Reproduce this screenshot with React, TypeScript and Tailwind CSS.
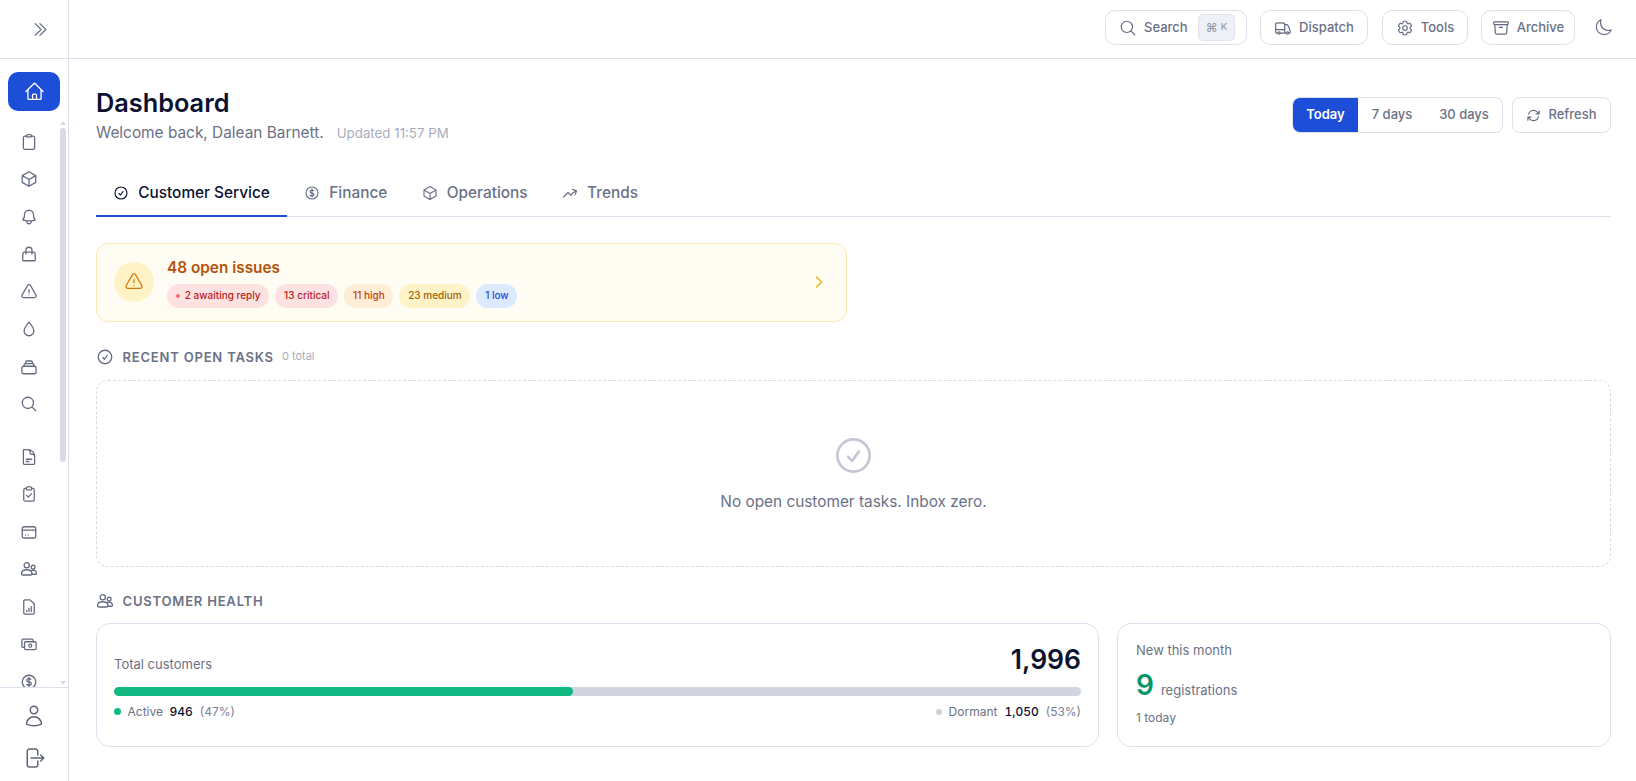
import React from "react";
import {
  HiOutlineHome, HiOutlineClipboard, HiOutlineCube, HiOutlineBell,
  HiOutlineExclamationTriangle, HiOutlineMagnifyingGlass, HiOutlineDocumentText,
  HiOutlineCurrencyDollar, HiOutlineUser, HiOutlineArrowRightOnRectangle, HiOutlineTruck,
  HiOutlineCog6Tooth, HiOutlineArchiveBox, HiOutlineMoon, HiOutlineArrowPath, HiOutlineCheckCircle,
  HiOutlineArrowTrendingUp, HiOutlineChevronDoubleRight, HiOutlineChevronRight,
} from "react-icons/hi2";

type P = { className?: string; strokeWidth?: number };

const Svg = ({ className, strokeWidth = 1.5, children }: P & { children: React.ReactNode }) => (
  <svg viewBox="0 0 24 24" fill="none" stroke="currentColor" strokeWidth={strokeWidth} strokeLinecap="round" strokeLinejoin="round" className={className}>
    {children}
  </svg>
);
const Drop = (p: P) => (
  <Svg {...p}><path d="M12 3c3 3.600 6.500 7.400 6.500 11.500a6.500 6.500 0 0 1-13 0C5.500 10.400 9 6.600 12 3Z" /></Svg>
);
const Stack = (p: P) => (
  <Svg {...p}>
    <rect x="2.500" y="11" width="19" height="10" rx="2.500" />
    <path d="M5.500 11V9a1.500 1.500 0 0 1 1.500-1.500h10A1.500 1.500 0 0 1 18.500 9v2M7.500 7.500v-2A1.500 1.500 0 0 1 9 4h6a1.500 1.500 0 0 1 1.500 1.500v2" />
  </Svg>
);
const Bag = (p: P) => (
  <Svg {...p}>
    <path d="M5.500 9.500h13a1.500 1.500 0 0 1 1.500 1.400l.5 8.600a1.500 1.500 0 0 1-1.500 1.500H5a1.500 1.500 0 0 1-1.500-1.500l.5-8.600a1.500 1.500 0 0 1 1.500-1.400Z" />
    <path d="M8 12V7a4 4 0 0 1 8 0v5" />
  </Svg>
);
const People = (p: P) => (
  <Svg {...p}>
    <circle cx="9" cy="7" r="3.500" />
    <circle cx="17.500" cy="9.500" r="2.500" />
    <path d="M2 18.500c0-3.500 3-5.500 7-5.500s7 2 7 5.500c0 1-1 1.500-2 1.500H4c-1 0-2-.5-2-1.500Z" />
    <path d="M15.500 14c3-1 6.500.5 6.500 3.500 0 1-.8 1.500-1.500 1.500H16" />
  </Svg>
);
const ClipCheck = (p: P) => (
  <Svg {...p}>
    <path d="M8.500 4.500H7A2 2 0 0 0 5 6.500V19.500A2 2 0 0 0 7 21.500H17A2 2 0 0 0 19 19.500V6.500A2 2 0 0 0 17 4.500H15.500" />
    <rect x="8.500" y="2.500" width="7" height="4" rx="1.200" />
    <path d="m9 14 2.200 2.200L15.200 11.500" />
  </Svg>
);
const Card = (p: P) => (
  <Svg {...p}>
    <rect x="3" y="5" width="18" height="15" rx="2.500" />
    <path d="M3 9.500h18M7.500 16h.01M11 16h.01" />
  </Svg>
);
const FileChart = (p: P) => (
  <Svg {...p}>
    <path d="M6.500 2.500h7L19 8v12a1.500 1.500 0 0 1-1.500 1.500h-11A1.500 1.500 0 0 1 5 20V4a1.500 1.500 0 0 1 1.500-1.500Z" />
    <path d="M9 18v-1.500M12 18v-4M15 18v-6.500" />
  </Svg>
);
const Money = (p: P) => (
  <Svg {...p}>
    <path d="M5 16.500H4A1.500 1.500 0 0 1 2.500 15V7A1.500 1.500 0 0 1 4 5.500h12A1.500 1.500 0 0 1 17.500 7v2" />
    <rect x="6" y="9" width="15.500" height="10.500" rx="1.500" />
    <circle cx="13.700" cy="14.200" r="2" />
  </Svg>
);

const navA = [HiOutlineClipboard, HiOutlineCube, HiOutlineBell, Bag, HiOutlineExclamationTriangle, Drop, Stack, HiOutlineMagnifyingGlass];
const navB = [HiOutlineDocumentText, ClipCheck, Card, People, FileChart, Money, HiOutlineCurrencyDollar];

function NavIcon({ I }: { I: React.ComponentType<P> }) {
  return (
    <div className="h-[37.5px] shrink-0 flex items-center justify-center w-[57px]">
      <I className="w-[18px] h-[18px]" strokeWidth={1.7} />
    </div>
  );
}

function Sidebar() {
  return (
    <aside className="w-[69px] shrink-0 border-r border-[#dde0ec] flex flex-col h-[722px] text-[#646a80]">
      <div className="px-2 pt-[13px] pb-[10px]">
        <div className="h-[39px] w-[52px] rounded-[10px] bg-[#1d4ed8] flex items-center justify-center text-white">
          <HiOutlineHome className="w-[21px] h-[21px]" />
        </div>
      </div>
      <div className="relative flex-1 overflow-hidden min-h-0">
        <div className="flex flex-col pt-[2px]">
          {navA.map((I, i) => <NavIcon key={i} I={I} />)}
          <div className="h-[15px] shrink-0" />
          {navB.map((I, i) => <NavIcon key={i} I={I} />)}
        </div>
        <div className="absolute right-[2px] top-[7px] w-[6px] h-[334px] rounded-full bg-[#d6dbe6]" />
        <div className="absolute right-[2px] top-0 w-0 h-0 border-x-[3px] border-x-transparent border-b-[4px] border-b-[#d6dbe6]" />
        <div className="absolute right-[2px] bottom-[2px] w-0 h-0 border-x-[3px] border-x-transparent border-t-[4px] border-t-[#d6dbe6]" />
      </div>
      <div className="border-t border-[#dde0ec] h-[94px] shrink-0 flex flex-col items-center pt-[16px] gap-[18px] text-[#5f6579]">
        <HiOutlineUser className="w-[24px] h-[24px]" />
        <HiOutlineArrowRightOnRectangle className="w-[24px] h-[24px]" />
      </div>
    </aside>
  );
}

function TopButton({ I, label, w }: { I: React.ComponentType<P>; label: string; w: string }) {
  return (
    <div className={"h-[35px] flex items-center justify-center gap-[7px] rounded-[10px] border border-[#dde0ec] text-[13px] font-medium text-[#6b7186] " + w}>
      <I className="w-[18px] h-[18px] text-[#646a80]" strokeWidth={1.6} />
      <span>{label}</span>
    </div>
  );
}

function TopBar() {
  return (
    <header className="h-[59px] border-b border-[#dde0ec] flex items-center shrink-0">
      <div className="w-[69px] h-full border-r border-[#dde0ec] flex items-center justify-center text-[#646a80]">
        <HiOutlineChevronDoubleRight className="w-[19px] h-[19px] ml-[12px]" />
      </div>
      <div className="flex-1 flex items-center justify-end gap-[13px] pr-[18px] h-full pb-[3px]">
        <div className="h-[35px] w-[142px] pl-[13px] pr-[11px] flex items-center rounded-[10px] border border-[#dde0ec] text-[13px] font-medium text-[#6b7186]">
          <HiOutlineMagnifyingGlass className="w-[18px] h-[18px] text-[#646a80]" strokeWidth={1.6} />
          <span className="ml-[7px]">Search</span>
          <span className="ml-auto w-[37px] h-[27px] rounded-[5px] bg-[#eef0f6] border border-[#e1e4ee] flex items-center justify-center text-[12px] text-[#9499ab] gap-[3px]">
            <span>⌘</span><span className="text-[9.500px]">K</span>
          </span>
        </div>
        <TopButton I={HiOutlineTruck} label="Dispatch" w="w-[108px] mr-[1px]" />
        <TopButton I={HiOutlineCog6Tooth} label="Tools" w="w-[86px]" />
        <TopButton I={HiOutlineArchiveBox} label="Archive" w="w-[94px]" />
        <div className="w-[30px] flex items-center justify-center text-[#646a80]">
          <HiOutlineMoon className="w-[19px] h-[19px]" />
        </div>
      </div>
    </header>
  );
}

function PageHead() {
  return (
    <div className="flex items-start justify-between pt-[28px]">
      <div>
        <h1 className="text-[25.300px] leading-[31px] font-semibold text-[#0b1130]">Dashboard</h1>
        <div className="flex items-baseline mt-[4px]">
          <span className="text-[15.400px] leading-[22px] text-[#6b7186]">Welcome back, Dalean Barnett.</span>
          <span className="ml-[13px] text-[13.300px] text-[#a8adbc]">Updated 11:57 PM</span>
        </div>
      </div>
      <div className="flex items-center gap-[9px] mt-[10px]">
        <div className="flex h-[36px] rounded-[8px] border border-[#dde0ec] overflow-hidden text-[13px] font-medium text-[#6b7186] items-stretch">
          <span className="w-[65px] bg-[#1d4ed8] text-white font-semibold flex items-center justify-center">Today</span>
          <span className="w-[68px] flex items-center justify-center">7 days</span>
          <span className="w-[76px] flex items-center justify-center">30 days</span>
        </div>
        <div className="h-[36px] w-[99px] flex items-center justify-center gap-[7px] rounded-[8px] border border-[#dde0ec] text-[13px] font-medium text-[#6b7186]">
          <HiOutlineArrowPath className="w-[15px] h-[15px] text-[#646a80]" strokeWidth={1.8} />
          <span>Refresh</span>
        </div>
      </div>
    </div>
  );
}

function Tabs() {
  const items: [React.ComponentType<P>, string][] = [
    [HiOutlineCheckCircle, "Customer Service"],
    [HiOutlineCurrencyDollar, "Finance"],
    [HiOutlineCube, "Operations"],
    [HiOutlineArrowTrendingUp, "Trends"],
  ];
  return (
    <div className="flex border-b border-[#dde0ec] mt-[27.500px]">
      {items.map(([I, t], i) => (
        <div
          key={t}
          className={
            i === 0
              ? "h-[45px] -mb-px px-[17.250px] flex items-center gap-[9px] text-[15.360px] font-medium border-b-2 border-[#1d4ed8] text-[#0b1130]"
              : "h-[45px] -mb-px px-[17.250px] flex items-center gap-[9px] text-[15.360px] font-medium border-b-2 border-transparent text-[#6b7186]"
          }
        >
          <I className="w-[16px] h-[16px]" strokeWidth={1.7} />
          <span>{t}</span>
        </div>
      ))}
    </div>
  );
}

function Pill({ className, children }: { className: string; children: React.ReactNode }) {
  return <span className={"h-[24px] px-[8.750px] rounded-full flex items-center text-[10px] font-medium " + className}>{children}</span>;
}

function Banner() {
  return (
    <div className="mt-[26px] w-[751px] h-[79px] rounded-[12px] border border-[#fce8b0] bg-[#fffcf4] flex items-center pl-[17px] pr-[19px]">
      <div className="w-[40px] h-[40px] rounded-full bg-[#fef3c7] flex items-center justify-center text-[#d97706]">
        <HiOutlineExclamationTriangle className="w-[20px] h-[20px]" />
      </div>
      <div className="ml-[13px] flex-1">
        <div className="text-[15.360px] leading-[22px] font-semibold text-[#b45309]">48 open issues</div>
        <div className="flex gap-[6px] mt-[5px]">
          <Pill className="bg-[#fee2e2] text-[#b91c1c] gap-[5px]"><span className="w-[4px] h-[4px] rounded-full bg-[#f87171]" />2 awaiting reply</Pill>
          <Pill className="bg-[#fee2e2] text-[#b91c1c]">13 critical</Pill>
          <Pill className="bg-[#ffedd5] text-[#c2410c]">11 high</Pill>
          <Pill className="bg-[#fef3c7] text-[#a16207]">23 medium</Pill>
          <Pill className="bg-[#dbeafe] text-[#1d4ed8]">1 low</Pill>
        </div>
      </div>
      <HiOutlineChevronRight className="w-[16px] h-[16px] text-[#eab308]" strokeWidth={2} />
    </div>
  );
}

function SectionHead({ I, title, note }: { I: React.ComponentType<P>; title: string; note?: string }) {
  return (
    <div className="flex items-center">
      <I className="w-[18px] h-[18px] text-[#646a80]" strokeWidth={1.7} />
      <span className="ml-[8.500px] text-[13.056px] leading-[18px] font-semibold tracking-[0.78px] text-[#6b7186]">{title}</span>
      {note && <span className="ml-[8px] text-[11px] text-[#a8adbc]">{note}</span>}
    </div>
  );
}

function Empty() {
  return (
    <div className="mt-[14px] h-[187px] rounded-[12px] border border-dashed border-[#d8dbe6] flex flex-col items-center pt-[53px]">
      <HiOutlineCheckCircle className="w-[43px] h-[43px] text-[#c3c7d3]" />
      <div className="mt-[14px] text-[15.360px] leading-[22px] text-[#6b7186]">No open customer tasks. Inbox zero.</div>
    </div>
  );
}

function Health() {
  return (
    <div className="mt-[13px] flex gap-[18px] h-[124px]">
      <div className="w-[1003px] rounded-[14px] border border-[#dde0ec] px-[17px] pt-[18px]">
        <div className="flex items-center justify-between h-[36px]">
          <span className="text-[13px] text-[#6b7186] mt-[11px]">Total customers</span>
          <span className="text-[26.500px] font-semibold text-[#0b1130] mt-[1px]">1,996</span>
        </div>
        <div className="mt-[9px] h-[9px] rounded-full bg-[#d2d5df] overflow-hidden">
          <div className="h-full w-[47.500%] bg-[#10b981] rounded-full" />
        </div>
        <div className="mt-[8px] flex items-center justify-between text-[12px] leading-[16px] text-[#6b7186]">
          <div className="flex items-center">
            <span className="w-[7px] h-[7px] rounded-full bg-[#10b981]" />
            <span className="ml-[6.500px]">Active</span>
            <span className="ml-[6.500px] font-medium tabular-nums text-[#0b1130]">946</span>
            <span className="ml-[7px] text-[#7a8094]">(47%)</span>
          </div>
          <div className="flex items-center">
            <span className="w-[6px] h-[6px] rounded-full bg-[#cfd2dc]" />
            <span className="ml-[7px]">Dormant</span>
            <span className="ml-[7px] font-medium tabular-nums text-[#0b1130]">1,050</span>
            <span className="ml-[7px] text-[#7a8094]">(53%)</span>
          </div>
        </div>
      </div>
      <div className="flex-1 rounded-[14px] border border-[#dde0ec] px-[18px] pt-[16px]">
        <div className="text-[13px] leading-[20px] text-[#6b7186]">New this month</div>
        <div className="flex items-baseline mt-[7px]">
          <span className="text-[28px] leading-[36px] font-semibold text-[#059669]">9</span>
          <span className="ml-[7px] text-[13px] text-[#6b7186]">registrations</span>
        </div>
        <div className="mt-[6px] text-[12px] leading-[18px] text-[#6b7186]">1 today</div>
      </div>
    </div>
  );
}

export default function App() {
  return (
    <div className="[font-family:Inter,sans-serif] bg-white h-[781px] w-full overflow-hidden flex flex-col">
      <TopBar />
      <div className="flex flex-1 min-h-0">
        <Sidebar />
        <main className="flex-1 min-w-0 pl-[27px] pr-[25px]">
          <PageHead />
          <Tabs />
          <Banner />
          <div className="mt-[26px]"><SectionHead I={HiOutlineCheckCircle} title="RECENT OPEN TASKS" note="0 total" /></div>
          <Empty />
          <div className="mt-[25px]"><SectionHead I={People} title="CUSTOMER HEALTH" /></div>
          <Health />
        </main>
      </div>
    </div>
  );
}
